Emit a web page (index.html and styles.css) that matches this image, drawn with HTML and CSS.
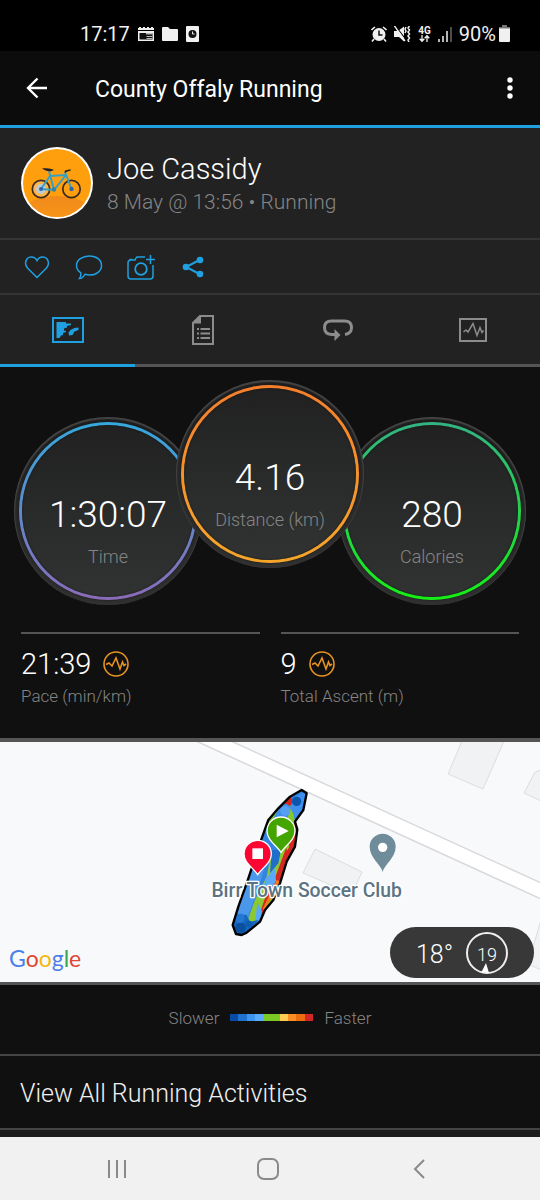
FILE: index.html
```html
<!DOCTYPE html>
<html lang="en">
<head>
    <meta charset="UTF-8">
    <meta name="viewport" content="width=device-width, initial-scale=1.0">
    <title>County Offaly Running</title>
    <link rel="stylesheet" href="styles.css">
</head>
<body>
    <div class="status-bar">
        <div class="status-left">
            <span class="clock">17:17</span>
            <svg width="16" height="16" viewBox="0 0 16 16"><path d="M0 2h1V1h2v1h2V1h2v1h2V1h2v1h2V1h2v1h1v2H0zM0 5h16v10H0z" fill="#eee"/><path d="M1.500 7h13v6.500h-13z" fill="#111"/><path d="M8 7h6.500v1.500H8zM8.500 10H14v1H8.500zM8.500 12H14v1H8.500z" fill="#bbb"/></svg>
            <svg width="16" height="16" viewBox="0 0 16 16"><path d="M0 2q0-1 1-1h5l2 2h7q1 0 1 1v10q0 1-1 1H1q-1 0-1-1z" fill="#f0f0f0"/></svg>
            <svg width="13" height="16" viewBox="0 0 13 16"><rect width="13" height="16" rx="1" fill="#f0f0f0"/><circle cx="6.500" cy="8" r="4" fill="#111"/><path d="M6.500 5.500V8h2" stroke="#eee" fill="none"/></svg>
        </div>
        <div class="status-right">
            <svg width="16" height="16" viewBox="0 0 16 16"><circle cx="8" cy="8.500" r="6.500" fill="#f0f0f0"/><path d="M.5 4 4 1M15.500 4 12 1M3 13l-2 2.500M13 13l2 2.500" stroke="#f0f0f0" stroke-width="1.600"/><path d="M8 4.500V9h3.500" stroke="#111" stroke-width="1.500" fill="none"/></svg>
            <svg width="17" height="16" viewBox="0 0 17 16"><path d="M0 5h4l6-4.500v15L5 11H0z" fill="#f0f0f0"/><path d="M1.500 0l10 13" stroke="#000" stroke-width="1.200"/><path d="M.5 0l10.500 15" stroke="#f0f0f0" stroke-width="1.400"/><path d="M12 1l-1 2 1 2-1 2M15.500 0l-1.500 2 1.500 2-1.500 2 1.500 2-1.500 2 1.500 2-1.500 2 1 2" stroke="#f0f0f0" stroke-width="1.500" fill="none"/></svg>
            <span class="network">4G<svg width="11" height="7" viewBox="0 0 11 7"><path d="M3 0v6M.7 3.800 3 6.300l2.300-2.500M8 7V1M5.700 3.200 8 .7l2.300 2.500" stroke="#f0f0f0" stroke-width="1.300" fill="none"/></svg></span>
            <svg width="14" height="16" viewBox="0 0 14 16"><path d="M1 13v3M5 10v6M9 5v11" stroke="#f0f0f0" stroke-width="1.500"/><path d="M13 1v15" stroke="#666" stroke-width="1.500"/></svg>
            <span class="battery">90%<svg width="11" height="17" viewBox="0 0 11 17"><path d="M3 0h5v2H3zM0 2h11v2H0z" fill="#777"/><path d="M0 3.500h11V16q0 1-1 1H1q-1 0-1-1z" fill="#f0f0f0"/></svg></span>
        </div>
    </div>

    <header class="app-bar">
        <button class="icon-button" aria-label="Back">
            <svg width="22" height="22" viewBox="0 0 22 22"><path d="M21 11H2M11.500 1.500 2 11l9.500 9.500" fill="none" stroke="#fff" stroke-width="2.400"/></svg>
        </button>
        <h1 class="title">County Offaly Running</h1>
        <button class="icon-button more" aria-label="More options">
            <svg width="6" height="22" viewBox="0 0 6 22"><g fill="#fff"><circle cx="3" cy="3" r="2.700"/><circle cx="3" cy="11" r="2.700"/><circle cx="3" cy="19" r="2.700"/></g></svg>
        </button>
    </header>

    <section class="profile">
        <svg class="avatar" viewBox="0 0 72 72">
            <defs>
                <linearGradient id="ground" x1="0" y1="0" x2="0" y2="1"><stop offset="0" stop-color="#f08a1c"/><stop offset="1" stop-color="#fb9a14"/></linearGradient>
                <clipPath id="disc"><circle cx="36" cy="36" r="34"/></clipPath>
            </defs>
            <circle cx="36" cy="36" r="36" fill="#fff"/>
            <g clip-path="url(#disc)">
                <path d="M0 0h72v72H0z" fill="#ff9f0e"/>
                <ellipse cx="36" cy="65" rx="34" ry="16" fill="url(#ground)"/>
            </g>
            <circle cx="20" cy="42" r="8.700" fill="#ffb547" stroke="#3c2a20" stroke-width="1.700"/>
            <circle cx="20" cy="42" r="5" fill="#b9cbd8"/>
            <circle cx="50.500" cy="42" r="8.700" fill="none" stroke="#3c2a20" stroke-width="1.700"/>
            <g fill="none" stroke="#35a0c4" stroke-width="2" stroke-linejoin="round">
                <path d="M20 42l9-13 16-1L33 43zM20 42l13 1-5-19M50.500 42 44 25"/>
            </g>
            <path d="M23 22q4-.5 8 1-4 1.500-8-1zM44 25.500l.5-1.500 5-1" fill="#222" stroke="#222" stroke-width="1.400"/>
            <circle cx="20" cy="42" r="2" fill="#3465a4"/><circle cx="50.500" cy="42" r="2.200" fill="#3465a4"/><circle cx="33" cy="42.500" r="2.200" fill="#2e86ab"/>
        </svg>
        <div class="profile-text">
            <div class="name">Joe Cassidy</div>
            <div class="meta">8 May @ 13:56 • Running</div>
        </div>
    </section>

    <div class="actions">
        <button class="action" aria-label="Like">
            <svg width="26" height="26" viewBox="0 0 26 26"><path d="M13 23.500 3.500 14C0 10 1.500 3.500 7 3c3-.2 5 1.800 6 3.700C14 4.800 16 2.800 19 3c5.500.5 7 7 3.500 11z"/></svg>
        </button>
        <button class="action" aria-label="Comment">
            <svg width="28" height="26" viewBox="0 0 28 26"><path d="M14.500 2C21.500 2 26.500 6 26.500 11.500S21.500 21 14.500 21c-1.600 0-3-.2-4.500-.7C8.500 22.500 6.500 24.500 4.500 24.500c1.200-1.500 1.600-3.500 1.300-5.700C3.200 17 1.500 14.500 1.500 11.500 1.500 6 7.500 2 14.500 2z"/></svg>
        </button>
        <button class="action" aria-label="Add photo">
            <svg width="30" height="26" viewBox="0 0 30 26"><path d="M19 3h-7.500q-1 0-1.500 1L9 6H5Q2 6 2 9v13q0 3 3 3h19q3 0 3-3V11M3.500 5.500h3M24.500 1v9M20 5.500h9"/><circle cx="15" cy="15" r="5.800" stroke-width="1.800"/></svg>
        </button>
        <button class="action" aria-label="Share">
            <svg width="22" height="22" viewBox="0 0 22 22"><path d="M17.500 4 4 11l13.500 7" stroke-width="2"/><g class="solid"><circle cx="4" cy="11" r="3.300"/><circle cx="18" cy="4" r="3.300"/><circle cx="18" cy="18" r="3.300"/></g></svg>
        </button>
    </div>

    <nav class="tabs">
        <button class="tab active" aria-label="Map">
            <svg width="32" height="26" viewBox="0 0 32 26"><rect x="1" y="1" width="30" height="24" fill="none" stroke="currentColor" stroke-width="2"/><path d="M4.500 5H14v1.500h5V8l-4 1v1.500l-3 1v2l2 .5V15l-3 1v2l-2 .5-1.500 2.500h-3zM26.500 10.500v2.500l-4 1.500-2 3.500-3.500.5-.5-3 2-2.500 4-2z" fill="currentColor"/></svg>
        </button>
        <button class="tab" aria-label="Details">
            <svg width="22" height="30" viewBox="0 0 22 30"><path d="M1 8v21h20V1H8z" fill="none" stroke="currentColor" stroke-width="2"/><path d="M1 8.500V7L7.500 1H9v7.500z" fill="currentColor"/><path d="M5 14h2M5 18.500h2M5 23h2M8.500 14H18M8.500 18.500H18M8.500 23H18" stroke="currentColor" stroke-width="2"/></svg>
        </button>
        <button class="tab" aria-label="Laps">
            <svg width="30" height="22" viewBox="0 0 30 22"><path d="M22 15.500q6.500-1 6.500-7 0-6.500-7-6.500h-13q-7 0-7 6.500t7 7H13" fill="none" stroke="currentColor" stroke-width="3"/><path d="M11.500 10l6 6-6 6z" fill="currentColor"/></svg>
        </button>
        <button class="tab" aria-label="Charts">
            <svg width="28" height="24" viewBox="0 0 28 24"><rect x="1" y="1" width="26" height="22" fill="none" stroke="currentColor" stroke-width="2"/><path d="M4.500 14l2.500-2 2 2L14 5.500l4 12 3-8 2 5 1.500-2" fill="none" stroke="currentColor" stroke-width="1.500"/></svg>
        </button>
    </nav>

    <main>
        <section class="dials">
            <div class="dial">
                <div class="ring time">
                    <div class="face">
                        <div class="value">1:30:07</div>
                        <div class="label">Time</div>
                    </div>
                </div>
            </div>
            <div class="dial center">
                <div class="ring distance">
                    <div class="face">
                        <div class="value">4.16</div>
                        <div class="label">Distance (km)</div>
                    </div>
                </div>
            </div>
            <div class="dial">
                <div class="ring calories">
                    <div class="face">
                        <div class="value">280</div>
                        <div class="label">Calories</div>
                    </div>
                </div>
            </div>
        </section>

        <section class="stats">
            <div class="stat">
                <div class="stat-value">21:39
                    <svg width="26" height="26" viewBox="0 0 26 26"><circle cx="13" cy="13" r="12"/><path d="M3 13.500 6 12l3 3 4-8 4 11 2.500-7 1.500 3.500 2-1.500"/></svg>
                </div>
                <div class="stat-label">Pace (min/km)</div>
            </div>
            <div class="stat">
                <div class="stat-value">9
                    <svg width="26" height="26" viewBox="0 0 26 26"><circle cx="13" cy="13" r="12"/><path d="M3 13.500 6 12l3 3 4-8 4 11 2.500-7 1.500 3.500 2-1.500"/></svg>
                </div>
                <div class="stat-label">Total Ascent (m)</div>
            </div>
        </section>

        <section class="map">
            <svg class="map-canvas" viewBox="0 0 540 240" preserveAspectRatio="xMidYMid slice">
                <g fill="#f1f2f3" stroke="#dcdde0">
                    <path d="M462-1 448 32l35 15 21-48zM541 28l-6 2-11 21 17 8zM315 107l47 23-10 22-49-21zM541 178l-13 44 13 6z"/>
                </g>
                <path d="M196-1 541 157v-16L231-1z" fill="#fff" stroke="#d9d9dd" stroke-width="1.500"/>
                <!-- recorded track, coloured by pace -->
                <svg x="180" y="-2" width="240" height="250" viewBox="0 0 720 750">
                    <defs>
                        <clipPath id="track"><path d="M365 150l15 10-10 50-25 35 7 23-7 52-25 45-20 65-20 50-25 30-15 35-40 33-15 7-17-3-10-27 17-55 25-70 15-45 30-90 20-55 30-35 35-35z"/></clipPath>
                    </defs>
                    <g clip-path="url(#track)">
                        <path d="M150 140h240v450H150z" fill="#3484df"/>
                        <path d="M330 165l-70 75 20 10 60-60z" fill="#d5271f"/>
                        <path d="M345 240l15 30-10 60-50 120-55 75-8-25 40-90 60-120z" fill="#d5271f"/>
                        <path d="M285 205l-25 45 20 20 35-65 20-10 10 50-8 15-12-15-10-35z" fill="#86c72c"/>
                        <path d="M250 300l25 35-15 75-35 70-22 60 20 14 20-35 40-90 45-110-8-20-35 70z" fill="#8bc932"/>
                        <path d="M318 325l-30 80-35 75-15 45 12-5 45-90 35-90z" fill="#d5271f"/>
                        <path d="M290 420l14 5-15 40-35 55-5-15z" fill="#f17a18"/>
                        <path d="M305 470l-45 55-14-2 20-35 30-50z" fill="#8bc932"/>
                        <path d="M300 200q20-20 32 5l-10 30-45 5z" fill="#3f8dea"/>
                        <path d="M345 170l40-20-15 62-25 20-15-30z" fill="#3f90ee"/>
                        <circle cx="350" cy="184" r="14" fill="#0b55ad"/>
                        <circle cx="316" cy="213" r="15" fill="#559ff1"/>
                        <path d="M275 330h28l-8 40-25 30z" fill="#1f6fc8"/>
                        <path d="M205 395l50-20-18 65-35 95-25 20-25-20z" fill="#4a97ec"/>
                        <path d="M285 385l-27 30-10 35 25-2 15-25z" fill="#5aa9f8"/>
                        <path d="M232 488l14 25-5 25-16 10z" fill="#5aa9f8"/>
                        <path d="M150 520l50 5 10 20 25-5-40 45h-45z" fill="#1667c2"/>
                        <circle cx="182" cy="563" r="16" fill="#0b509f"/><circle cx="180" cy="535" r="14" fill="#2377d0"/><circle cx="207" cy="552" r="10" fill="#0f5cb4"/>
                    </g>
                    <path d="M365 150l15 10-10 50-25 35 7 23-7 52-25 45-20 65-20 50-25 30-15 35-40 33-15 7-17-3-10-27 17-55 25-70 15-45 30-90 20-55 30-35 35-35z" fill="none" stroke="#000" stroke-width="7" stroke-linejoin="round"/>
                    <path d="M608 396c-4-22-39-42-39-76a39 39 0 0 1 78 0c0 34-35 54-39 76z" fill="#6f8c9b"/>
                    <circle cx="608" cy="322" r="14" fill="#fff"/>
                    <text class="place" x="380" y="472">Birr Town Soccer Club</text>
                    <path d="M303 337c-12-20-42-36-42-64a42 42 0 0 1 84 0c0 28-30 44-42 64z" fill="#44a500" stroke="#fff" stroke-width="4"/>
                    <path d="M290 254v38l36-19z" fill="#fff"/>
                    <path d="M233 404c-12-20-41-34-41-62a41 41 0 0 1 82 0c0 28-29 42-41 62z" fill="#fb0533" stroke="#fff" stroke-width="4"/>
                    <path d="M217 325h32v32h-32z" fill="#fff"/>
                </svg>
            </svg>
            <div class="google"><span class="g-blue">G</span><span class="g-red">o</span><span class="g-yellow">o</span><span class="g-blue">g</span><span class="g-green">l</span><span class="g-red">e</span></div>
            <div class="weather">
                <span class="temperature">18°</span>
                <span class="wind">19
                    <svg class="wind-arrow" width="8" height="10" viewBox="0 0 8 10"><path d="M5 0l3 10-4-1-4 1z" fill="#fff"/></svg>
                </span>
            </div>
        </section>

        <div class="legend">
            <span>Slower</span>
            <svg width="83" height="7" viewBox="0 0 100 7" preserveAspectRatio="none" shape-rendering="crispEdges">
                <path d="M0 0h10v7H0z" fill="#064ba5"/><path d="M10 0h10v7H10z" fill="#1f73ce"/><path d="M20 0h10v7H20z" fill="#3c95f0"/><path d="M30 0h10v7H30z" fill="#5aabff"/><path d="M40 0h20v7H40z" fill="#7bc925"/><path d="M60 0h10v7H60z" fill="#ffcb50"/><path d="M70 0h10v7H70z" fill="#f98f22"/><path d="M80 0h10v7H80z" fill="#ee6c10"/><path d="M90 0h10v7H90z" fill="#d12726"/>
            </svg>
            <span>Faster</span>
        </div>

        <a class="view-all" href="#">View All Running Activities</a>
    </main>

    <div class="system-nav">
        <button aria-label="Recent apps"><svg width="22" height="22" viewBox="0 0 22 22"><path d="M3 2v18M11 2v18M19 2v18"/></svg></button>
        <button aria-label="Home"><svg width="22" height="22" viewBox="0 0 22 22"><rect x="1" y="1" width="20" height="20" rx="6"/></svg></button>
        <button aria-label="Back"><svg width="22" height="22" viewBox="0 0 22 22"><path d="M16 2 7 11l9 9"/></svg></button>
    </div>
</body>
</html>
```
FILE: styles.css
```css
:root {
    --bg-color: #101010;
    --panel-bg: #222222;
    --accent: #1fa0e0;
    --muted: #858585;
    --line: #555555;
}
* {
    box-sizing: border-box;
}
body {
    margin: 0;
    background-color: #f1f1f1;
    color: #ffffff;
    font-family: Roboto, "Liberation Sans", sans-serif;
    font-weight: 300;
}
button {
    display: flex;
    align-items: center;
    justify-content: center;
    padding: 0;
    border: none;
    background: none;
    color: inherit;
    cursor: pointer;
}
svg {
    display: block;
    flex-shrink: 0;
}
.status-bar {
    display: flex;
    justify-content: space-between;
    height: 51px;
    padding: 16px 30px 0 80px;
    background-color: #000000;
    color: #f0f0f0;
    font-size: 20px;
    font-weight: 400;
    line-height: 34px;
}
.status-left,
.status-right {
    display: flex;
    align-items: center;
    gap: 8px;
}
.status-right {
    gap: 7px;
}
.network {
    display: flex;
    flex-direction: column;
    align-items: center;
    font-size: 10px;
    font-weight: 700;
    line-height: 9px;
}
.battery {
    display: flex;
    align-items: center;
    gap: 3px;
}
.app-bar {
    display: flex;
    align-items: center;
    height: 77px;
    padding: 0 18px 0 26px;
    border-bottom: 3px solid var(--accent);
    background-color: #0c0c0c;
}
.icon-button {
    height: 48px;
}
.title {
    flex: 1;
    margin: 0 0 0 47px;
    padding-top: 3px;
    font-size: 23px;
    font-weight: 400;
    line-height: 32px;
}
.more {
    width: 24px;
}
.profile {
    display: flex;
    align-items: center;
    gap: 14px;
    height: 112px;
    padding: 0 21px;
    border-bottom: 2px solid #353535;
    background-color: var(--panel-bg);
}
.avatar {
    width: 72px;
    height: 72px;
}
.profile-text {
    padding-top: 2px;
}
.name {
    font-size: 29px;
    line-height: 36px;
}
.meta {
    color: var(--muted);
    font-size: 21px;
    line-height: 30px;
}
.actions {
    display: flex;
    height: 55px;
    padding-left: 11px;
    border-bottom: 2px solid #353535;
    background-color: var(--panel-bg);
}
.action {
    width: 52px;
}
.action svg {
    fill: none;
    stroke: var(--accent);
    stroke-width: 1.5;
}
.action .solid {
    fill: var(--accent);
    stroke: none;
}
.tabs {
    display: flex;
    height: 72px;
    background-color: var(--panel-bg);
}
.tab {
    flex: 1;
    border-bottom: 3px solid var(--line);
    color: #8c8c8c;
}
.tab.active {
    border-color: var(--accent);
    color: var(--accent);
}
main {
    background-color: var(--bg-color);
}
.dials {
    display: flex;
    align-items: flex-start;
    padding: 13px 14px 0;
}
.dial {
    flex: 1;
    aspect-ratio: 1;
    margin: 37px 0 0;
    padding: 5px;
    border-radius: 50%;
    background: linear-gradient(#1f1f1f, #303030);
    box-shadow: inset 0 1px 1px 1px #444444;
}
.dial.center {
    z-index: 1;
    margin: 0 -26px;
}
.ring {
    height: 100%;
    padding: 3px;
    border-radius: 50%;
    box-shadow: 0 0 2px #111111;
}
.ring.time {
    background: linear-gradient(#35a8dc, #8a6bb8);
}
.ring.distance {
    background: linear-gradient(#f57f2c, #f5a52a);
}
.ring.calories {
    background: linear-gradient(#34b283, #14f014);
}
.face {
    height: 100%;
    padding-top: 66px;
    border-radius: 50%;
    background: linear-gradient(#212121, #313333);
    box-shadow: inset 0 0 2px #111111;
    text-align: center;
}
.value {
    font-size: 37px;
    line-height: 48px;
}
.label {
    margin-top: 6px;
    color: var(--muted);
    font-size: 18px;
    line-height: 24px;
}
.stats {
    display: grid;
    grid-template-columns: 1fr 1fr;
    gap: 21px;
    padding: 27px 21px 28px;
}
.stat {
    padding-top: 11px;
    border-top: 2px solid var(--line);
}
.stat-value {
    display: flex;
    align-items: center;
    gap: 12px;
    font-size: 29px;
    line-height: 38px;
}
.stat-value svg {
    fill: none;
    stroke: #e8941f;
    stroke-width: 1.6;
}
.stat-label {
    padding-bottom: 1px;
    color: var(--muted);
    font-size: 17px;
    line-height: 26px;
}
.map {
    position: relative;
    height: 247px;
    border-top: 4px solid var(--line);
    border-bottom: 3px solid var(--line);
    background-color: #f8f9fb;
}
.map-canvas {
    width: 100%;
    height: 100%;
}
.place {
    fill: #5b7382;
    stroke: #ffffff;
    stroke-width: 8px;
    paint-order: stroke;
    stroke-linejoin: round;
    font-size: 58px;
    font-weight: 500;
    text-anchor: middle;
}
.google {
    position: absolute;
    left: 9px;
    bottom: 9px;
    font-family: Lato, sans-serif;
    font-size: 23px;
    font-weight: 400;
    line-height: 30px;
}
.g-blue {
    color: #4a80e8;
}
.g-red {
    color: #df4638;
}
.g-yellow {
    color: #f2b90f;
}
.g-green {
    color: #36a455;
}
.weather {
    position: absolute;
    right: 6px;
    bottom: 4px;
    display: flex;
    align-items: center;
    justify-content: space-between;
    width: 144px;
    height: 51px;
    padding: 0 26px;
    border-radius: 26px;
    background-color: #383838;
}
.temperature {
    padding-top: 3px;
    font-size: 25px;
}
.wind {
    position: relative;
    width: 42px;
    height: 42px;
    border: 2px solid #eeeeee;
    border-radius: 50%;
    font-size: 18px;
    line-height: 42px;
    text-align: center;
}
.wind-arrow {
    position: absolute;
    left: 13px;
    bottom: -1px;
}
.legend {
    display: flex;
    align-items: center;
    justify-content: center;
    gap: 11px;
    height: 69px;
    padding-bottom: 4px;
    color: var(--muted);
    font-size: 18px;
}
.legend span {
    font-size: 17px;
}
.view-all {
    display: block;
    padding: 19px 20px 16px;
    border-top: 2px solid #444444;
    border-bottom: 2px solid #444444;
    color: #f0f0f0;
    font-size: 25px;
    line-height: 37px;
    text-decoration: none;
}
main::after {
    content: "";
    display: block;
    height: 7px;
    background-color: #1c1c1c;
}
.system-nav {
    display: flex;
    height: 63px;
    padding: 0 45px 0 41px;
}
.system-nav button {
    flex: 1;
}
.system-nav svg {
    fill: none;
    stroke: #8a8a8a;
    stroke-width: 2;
}
```
